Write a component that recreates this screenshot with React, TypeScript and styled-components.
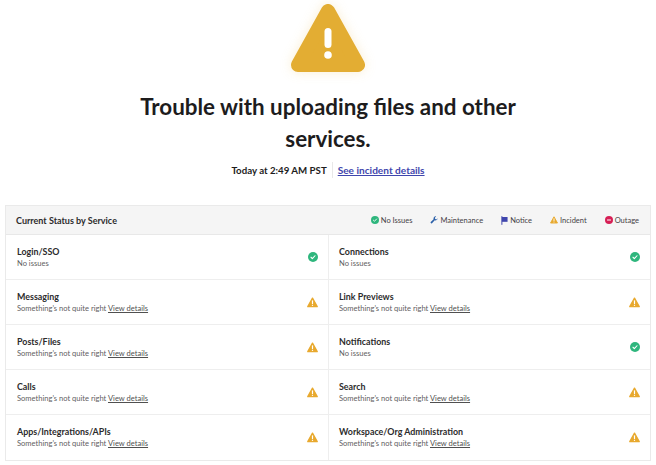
import React from "react";
import styled, { createGlobalStyle } from "styled-components";

const Global = createGlobalStyle`
  html, body { margin: 0; padding: 0; background: #fff; overflow: hidden; }
  body { font-family: Lato, "Liberation Sans", sans-serif; color: #1d1c1d; }
`;

const Page = styled.div`
  width: 656px;
  height: 465px;
  display: flex;
  flex-direction: column;
  align-items: center;
`;
const Hero = styled.svg`
  width: 90px;
  height: 80px;
  display: block;
  filter: drop-shadow(0 0 6px rgba(232, 178, 60, 0.22));
`;
const Title = styled.h1`
  margin: 11px 0 0;
  width: 420px;
  text-align: center;
  font-size: 22.4px;
  line-height: 32px;
  font-weight: 700;
  color: #1d1c1d;
`;
const Meta = styled.div`
  display: flex;
  align-items: center;
  height: 16px;
  margin-top: 7px;
`;
const Time = styled.span`
  font-size: 9.7px;
  font-weight: 700;
  padding-right: 5px;
  border-right: 1px solid #e8e8e8;
  margin-right: 5px;
  line-height: 16px;
`;
const MetaLink = styled.a`
  font-size: 10.1px;
  color: #3f46ad;
  font-weight: 700;
  text-decoration: underline;
`;
const Table = styled.div`
  width: 646px;
  margin-top: 27px;
  border: 1px solid #eaeaea;
  box-sizing: border-box;
`;
const HeadRow = styled.div`
  height: 29px;
  box-sizing: border-box;
  background: #f5f5f5;
  border-bottom: 1px solid #e8e8e8;
  display: flex;
  align-items: center;
  padding: 0 11px 0 10px;
`;
const HeadTitle = styled.div`
  font-size: 9px;
  font-weight: 700;
  flex: 1;
  color: #2c2b2c;
`;
const Legend = styled.div`
  display: flex;
  align-items: center;
  gap: 18px;
`;
const LegendItem = styled.div`
  display: flex;
  align-items: center;
  gap: 2px;
  font-size: 7.5px;
  color: #454245;
`;
const Grid = styled.div`
  display: grid;
  grid-template-columns: 322px 1fr;
`;
const Cell = styled.div<{ $right?: boolean; $last?: boolean }>`
  height: 45px;
  box-sizing: border-box;
  display: flex;
  align-items: center;
  justify-content: space-between;
  padding: 0 10px 0 ${(p) => (p.$right ? "10px" : "11px")};
  border-bottom: ${(p) => (p.$last ? "none" : "1px solid #eeeeee")};
  border-left: ${(p) => (p.$right ? "1px solid #eeeeee" : "none")};
`;
const Info = styled.div`
  display: flex;
  flex-direction: column;
`;
const Name = styled.div`
  font-size: 8.9px;
  font-weight: 700;
  line-height: 12px;
  color: #2c2b2c;
`;
const Detail = styled.div`
  font-size: 7.55px;
  line-height: 11px;
  color: #616061;
`;
const DetailLink = styled.a`
  color: #505050;
  text-decoration: underline;
`;

const Check = ({ s = 10 }: { s?: number }) => (
  <svg width={s} height={s} viewBox="0 0 20 20">
    <circle cx="10" cy="10" r="10" fill="#2eb67d" />
    <path d="M6 10.5l2.7 2.7L14 7.5" stroke="#fff" strokeWidth="2.2" fill="none" strokeLinecap="round" strokeLinejoin="round" />
  </svg>
);
const Warn = ({ s = 11 }: { s?: number }) => (
  <svg width={s} height={s} viewBox="0 0 20 20">
    <path d="M10 2L18.6 17.5H1.4Z" fill="#e8a92e" stroke="#e8a92e" strokeWidth="2.4" strokeLinejoin="round" />
    <path d="M10 7v5" stroke="#fff" strokeWidth="2.2" strokeLinecap="round" />
    <circle cx="10" cy="15.2" r="1.3" fill="#fff" />
  </svg>
);
const Wrench = () => (
  <svg width="8" height="8" viewBox="0 0 20 20">
    <path d="M19 5.5a5.5 5.5 0 0 1-7.2 5.2L5 18a2.3 2.3 0 0 1-3.2-3.2L9 8A5.5 5.5 0 0 1 15.5 1L12 4.5 13 7.5 16 8.5Z" fill="#2a5fa8" />
  </svg>
);
const Flag = () => (
  <svg width="7" height="9" viewBox="0 0 16 20">
    <path d="M2 1v18" stroke="#3f46ad" strokeWidth="2.2" strokeLinecap="round" />
    <path d="M2 2h13v11H2z" fill="#3f46ad" />
  </svg>
);
const Outage = () => (
  <svg width="8" height="8" viewBox="0 0 20 20">
    <circle cx="10" cy="10" r="10" fill="#d61f55" />
    <rect x="5" y="8.5" width="10" height="3" rx="1" fill="#fff" />
  </svg>
);

const WARN = "Something's not quite right";
const rows: [string, boolean, string, boolean][] = [
  ["Login/SSO", true, "Connections", true],
  ["Messaging", false, "Link Previews", false],
  ["Posts/Files", false, "Notifications", true],
  ["Calls", false, "Search", false],
  ["Apps/Integrations/APIs", false, "Workspace/Org Administration", false],
];

const Service = ({ name, ok, right, last }: { name: string; ok: boolean; right?: boolean; last?: boolean }) => (
  <Cell $right={right} $last={last}>
    <Info>
      <Name>{name}</Name>
      <Detail>
        {ok ? "No issues" : <>{WARN} <DetailLink>View details</DetailLink></>}
      </Detail>
    </Info>
    {ok ? <Check /> : <Warn />}
  </Cell>
);

export default function App() {
  return (
    <Page>
      <Global />
      <Hero viewBox="0 0 90 80">
        <path d="M45 11L75 65H15Z" fill="#e3ad33" stroke="#e3ad33" strokeWidth="14" strokeLinejoin="round" />
        <rect x="41.5" y="28" width="7" height="20" rx="3.5" fill="#fff" />
        <circle cx="45" cy="55" r="3.8" fill="#fff" />
      </Hero>
      <Title>Trouble with uploading files and other services.</Title>
      <Meta>
        <Time>Today at 2:49 AM PST</Time>
        <MetaLink>See incident details</MetaLink>
      </Meta>
      <Table>
        <HeadRow>
          <HeadTitle>Current Status by Service</HeadTitle>
          <Legend>
            <LegendItem><Check s={8} />No Issues</LegendItem>
            <LegendItem><Wrench />Maintenance</LegendItem>
            <LegendItem><Flag />Notice</LegendItem>
            <LegendItem><Warn s={8} />Incident</LegendItem>
            <LegendItem><Outage />Outage</LegendItem>
          </Legend>
        </HeadRow>
        <Grid>
          {rows.map((r, i) => (
            <React.Fragment key={r[0]}>
              <Service name={r[0]} ok={r[1]} last={i === 4} />
              <Service name={r[2]} ok={r[3]} right last={i === 4} />
            </React.Fragment>
          ))}
        </Grid>
      </Table>
    </Page>
  );
}
